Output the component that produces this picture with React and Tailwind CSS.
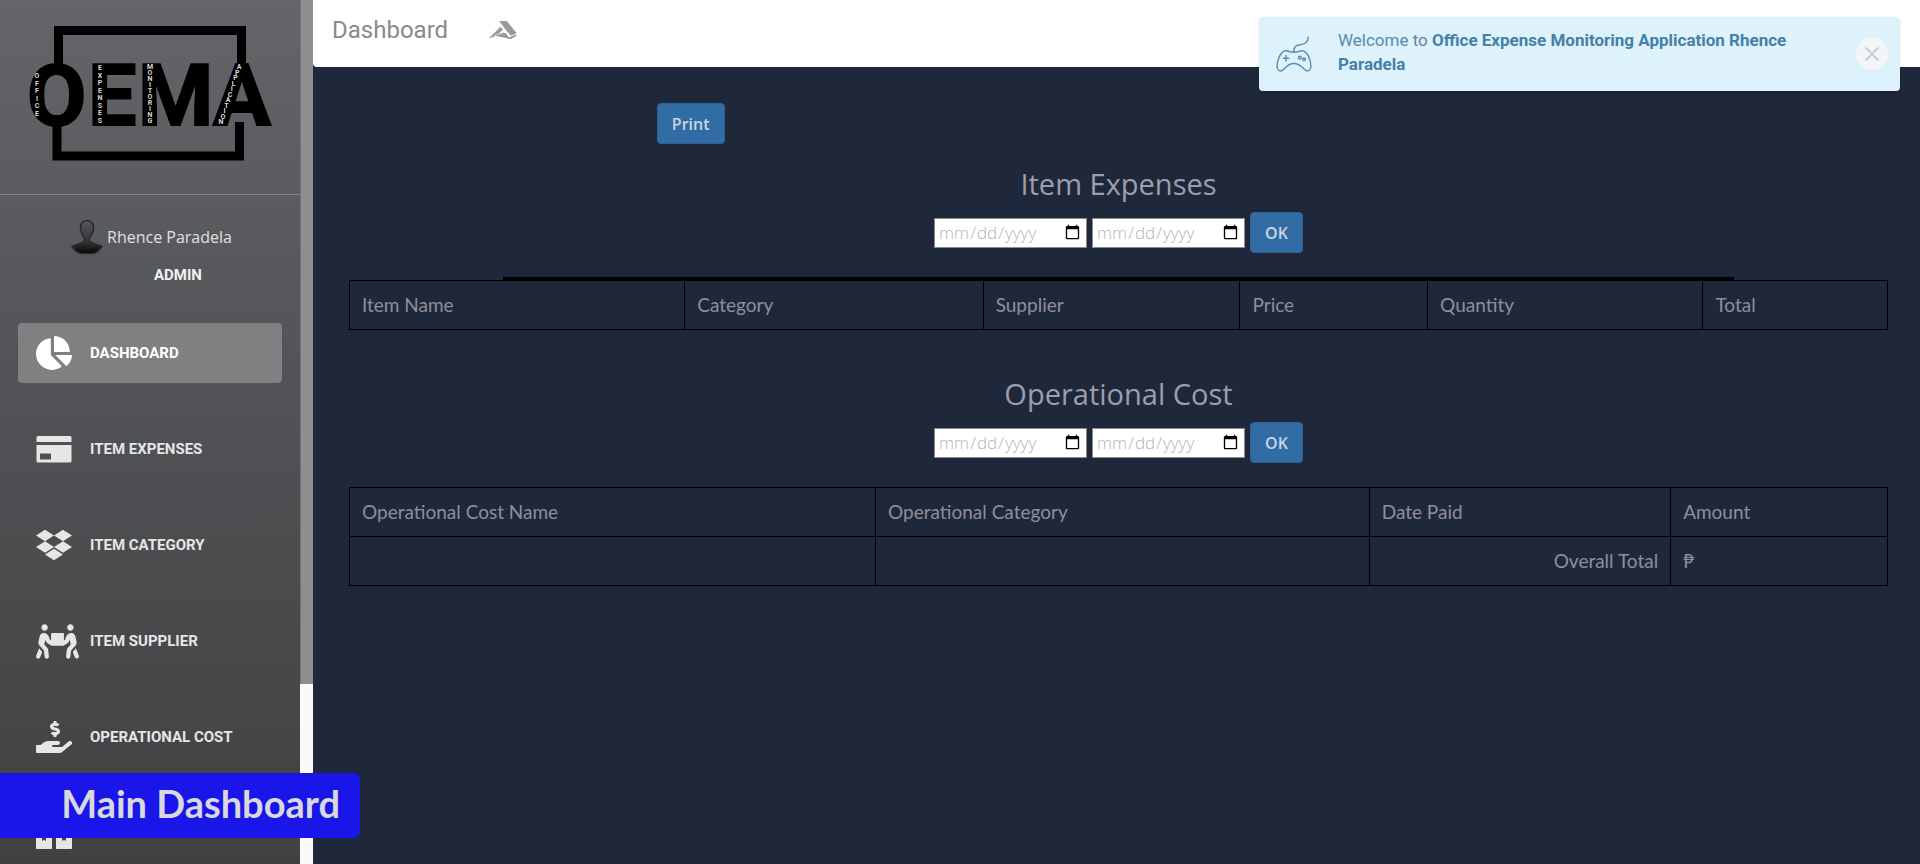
import { FaAccusoft, FaBoxes, FaChartPie, FaDropbox, FaHandHoldingUsd, FaPeopleCarry } from "react-icons/fa";

function Logo() {
  const words = [
    { text: "OFFICE", x: 37, y: 78, step: 7.5, slant: 0 },
    { text: "EXPENSES", x: 100, y: 70, step: 7.5, slant: 0 },
    { text: "MONITORING", x: 150, y: 69, step: 6, slant: 0 },
    { text: "APPLICATION", x: 239, y: 69, step: 5.5, slant: -1.8 },
  ];
  return (
    <svg viewBox="0 0 300 194" className="block w-full" role="img" aria-label="OEMA">
      <path d="M58.500 66V30.500H241.500V66M57 122V156H239.500V122" fill="none" stroke="#000" strokeWidth="9" />
      <g fontFamily="Roboto, sans-serif" fontWeight="700" fill="#000" stroke="#000" strokeWidth="2" fontSize="86">
        <text x="27" y="125">O</text>
        <text x="88" y="125">E</text>
        <text x="138" y="125">M</text>
        <text x="213" y="125">A</text>
      </g>
      <g fontFamily="Roboto, sans-serif" fontWeight="700" fill="#d8d8d8" fontSize="7" textAnchor="middle">
        {words.map((w) => (
          <text
            key={w.text}
            x={w.text.split("").map((_, i) => w.x + i * w.slant).join(" ")}
            y={w.text.split("").map((_, i) => w.y + i * w.step).join(" ")}
          >
            {w.text}
          </text>
        ))}
      </g>
    </svg>
  );
}

function Avatar() {
  return (
    <svg viewBox="0 0 32 35" className="h-9 w-8" aria-hidden="true">
      <defs>
        <linearGradient id="bust" x1="0" y1="0" x2="0" y2="1">
          <stop offset="0" stopColor="#55565a" />
          <stop offset="0.6" stopColor="#3a3a3c" />
          <stop offset="1" stopColor="#050505" />
        </linearGradient>
      </defs>
      <path
        d="M16 1c-4.500 0-6.800 3.500-6.500 8 .3 3.500 1.700 6 3 8 1 1.800 1.500 3.500.5 5C11.500 23.800 4 25.500 1 27 3.500 30.500 7 34 10 34h12c3 0 6.500-3.500 9-7-3-1.500-10.500-3.200-12-5-1-1.500-.5-3.200.5-5 1.300-2 2.700-4.500 3-8 .3-4.500-2-8-6.500-8z"
        fill="url(#bust)"
        stroke="#29292b"
        strokeWidth="1.500"
      />
    </svg>
  );
}

function CardIcon({ className }) {
  return (
    <svg viewBox="0 0 36 36" fill="currentColor" className={className} aria-hidden="true">
      <path d="M2 5h32a1.500 1.500 0 0 1 1.500 1.500V11H.5V6.500A1.500 1.500 0 0 1 2 5z" />
      <path fillRule="evenodd" d="M.5 14h35v16a1.500 1.500 0 0 1-1.500 1.500H2A1.500 1.500 0 0 1 .5 30zM4 22.500v6h11v-6z" />
    </svg>
  );
}

function GamepadIcon() {
  return (
    <svg viewBox="0 0 34 34" className="size-9 shrink-0" fill="none" stroke="#5b8fb0" strokeWidth="1.400" strokeLinecap="round" strokeLinejoin="round" aria-hidden="true">
      <path d="M17 15c-.5-5 2-6.500 6-6.800 4.500-.3 7-2.700 7.500-7" />
      <path d="M9 14c2-.6 3.500 1.300 8 1.300s6-1.900 8-1.300c5 1 8 9 8 14.500 0 2.500-1.500 4.500-3.500 4.500-3.500 0-5-7-12.500-7S8 33 4.500 33C2.500 33 1 31 1 28.500 1 23 4 15 9 14z" />
      <path d="M9.500 18.500v5M7 21h5" />
      <circle cx="22.500" cy="20.500" r="1.300" />
      <circle cx="26.500" cy="22" r="1.300" />
    </svg>
  );
}

const navItems = [
  { label: "Dashboard", Icon: FaChartPie, active: true },
  { label: "Item Expenses", Icon: CardIcon },
  { label: "Item Category", Icon: FaDropbox },
  { label: "Item Supplier", Icon: FaPeopleCarry, wide: true },
  { label: "Operational Cost", Icon: FaHandHoldingUsd },
  { label: "Operational Category", Icon: FaBoxes },
];

function Sidebar() {
  return (
    <aside className="flex w-[313px] shrink-0 overflow-hidden">
      <div className="flex min-w-0 flex-1 flex-col bg-linear-to-b from-[#646569] via-[#505154] to-[#414142]">
        <div className="border-b border-[#858688]">
          <Logo />
        </div>
        <div className="flex items-center pt-6 pl-[71px]">
          <Avatar />
          <span className="pl-1 font-['Open_Sans',sans-serif] text-base leading-6 text-[#e0e0e0]">Rhence Paradela</span>
        </div>
        <p className="mt-2 pl-[154px] text-[15px] leading-6 font-bold text-[#f2f2f2]">ADMIN</p>
        <nav className="mt-9 flex flex-col gap-9 px-[18px]">
          {navItems.map(({ label, Icon, active, wide }) => (
            <a
              key={label}
              href="#"
              className={
                active
                  ? "flex h-15 shrink-0 items-center rounded bg-[#7f8082] px-[18px] text-white"
                  : "flex h-15 shrink-0 items-center rounded px-[18px] text-[#e6e6e6]"
              }
            >
              <span className="flex w-[54px] shrink-0 items-center">
                <Icon className={wide ? "h-[35px] w-[43px] shrink-0" : "size-9"} />
              </span>
              <span className="text-[15px] leading-6 font-bold whitespace-nowrap uppercase">{label}</span>
            </a>
          ))}
        </nav>
      </div>
      <div className="w-[13px] shrink-0 bg-[#fafafa]">
        <div className="h-[79.2%] border-l border-[#757575] bg-[#8e8e8e]" />
      </div>
    </aside>
  );
}

const buttonClass =
  "h-[41px] rounded border border-[#2e6295] bg-[#316ca4] px-[14px] font-['Open_Sans',sans-serif] text-base leading-6 font-semibold text-[#c9d6e2]";

function DateRange({ name }) {
  const input =
    "h-[30px] w-[153px] border border-[#8a8a8a] bg-white px-[3px] font-['Open_Sans',sans-serif] text-[17px] font-light text-[#b4b4b8]";
  return (
    <form className="flex items-center justify-center gap-[5px]" onSubmit={(e) => e.preventDefault()}>
      <input type="date" aria-label={name + " from"} className={input} />
      <input type="date" aria-label={name + " to"} className={input} />
      <button type="submit" className={buttonClass}>
        OK
      </button>
    </form>
  );
}

const headingClass = "text-center font-['Open_Sans',sans-serif] text-[29px] leading-10 text-[#9f9dab]";
const tableClass = "w-full table-fixed border-collapse text-left font-['Lato',sans-serif] text-[19px] leading-7 text-[#8f8e9c]";
const cellClass = "h-[49px] border border-black px-3 py-0 font-normal";

export default function App() {
  return (
    <div className="relative flex h-screen overflow-hidden bg-[#1f283a] font-['Roboto',sans-serif]">
      <Sidebar />
      <main className="min-w-0 flex-1">
        <header className="flex h-[67px] items-center gap-[41px] rounded-bl bg-white pb-[7px] pl-[19px] text-[#8a8a8a]">
          <h1 className="text-2xl">Dashboard</h1>
          <FaAccusoft className="size-7 text-[#9a9a9a]" />
        </header>

        <div className="pr-8 pl-9">
          <div className="flex pt-9 pl-[20%]">
            <button type="button" className={buttonClass}>
              Print
            </button>
          </div>

          <section className="pt-5">
            <h2 className={headingClass}>Item Expenses</h2>
            <div className="pt-2">
              <DateRange name="Item expenses" />
            </div>
            <div className="mx-auto mt-6 h-[3px] w-4/5 bg-black" />
            <table className={tableClass}>
              <colgroup>
                <col className="w-[21.8%]" />
                <col className="w-[19.4%]" />
                <col className="w-[16.7%]" />
                <col className="w-[12.2%]" />
                <col className="w-[17.9%]" />
                <col className="w-[12%]" />
              </colgroup>
              <thead>
                <tr>
                  {["Item Name", "Category", "Supplier", "Price", "Quantity", "Total"].map((h) => (
                    <th key={h} className={cellClass}>
                      {h}
                    </th>
                  ))}
                </tr>
              </thead>
            </table>
          </section>

          <section className="pt-11">
            <h2 className={headingClass}>Operational Cost</h2>
            <div className="pt-2">
              <DateRange name="Operational cost" />
            </div>
            <table className={tableClass + " mt-6"}>
              <colgroup>
                <col className="w-[34.2%]" />
                <col className="w-[32.1%]" />
                <col className="w-[19.6%]" />
                <col className="w-[14.1%]" />
              </colgroup>
              <thead>
                <tr>
                  {["Operational Cost Name", "Operational Category", "Date Paid", "Amount"].map((h) => (
                    <th key={h} className={cellClass}>
                      {h}
                    </th>
                  ))}
                </tr>
              </thead>
              <tbody>
                <tr>
                  <td className={cellClass} />
                  <td className={cellClass} />
                  <td className={cellClass + " text-right"}>Overall Total</td>
                  <td className={cellClass}>₱</td>
                </tr>
              </tbody>
            </table>
          </section>
        </div>
      </main>

      <div role="alert" className="absolute top-[17px] right-5 flex h-[74px] w-[641px] items-center rounded bg-[#def2fc] pr-3 pl-[17px] text-[17px] leading-6 text-[#5a89a8] shadow-sm">
        <GamepadIcon />
        <p className="flex-1 pr-16 pb-1 pl-[26px]">
          Welcome to <b className="text-[#4480a8]">Office Expense Monitoring Application Rhence Paradela</b>
        </p>
        <button type="button" aria-label="Close" className="flex size-8 items-center justify-center rounded-full bg-[#f4f5f6] text-[#c9cccf]">
          <svg viewBox="0 0 16 16" className="size-4" fill="none" stroke="currentColor" strokeWidth="1.800" aria-hidden="true">
            <path d="M1.500 1.500l13 13M14.500 1.500l-13 13" />
          </svg>
        </button>
      </div>

      <div className="absolute bottom-[26px] left-0 flex h-[65px] w-[360px] items-center justify-end rounded-r-md bg-[#1a16ea] pr-5 pb-1 font-['Lato',sans-serif] text-[38px] font-bold whitespace-nowrap text-[#d8d8de]">
        Main Dashboard
      </div>
    </div>
  );
}
